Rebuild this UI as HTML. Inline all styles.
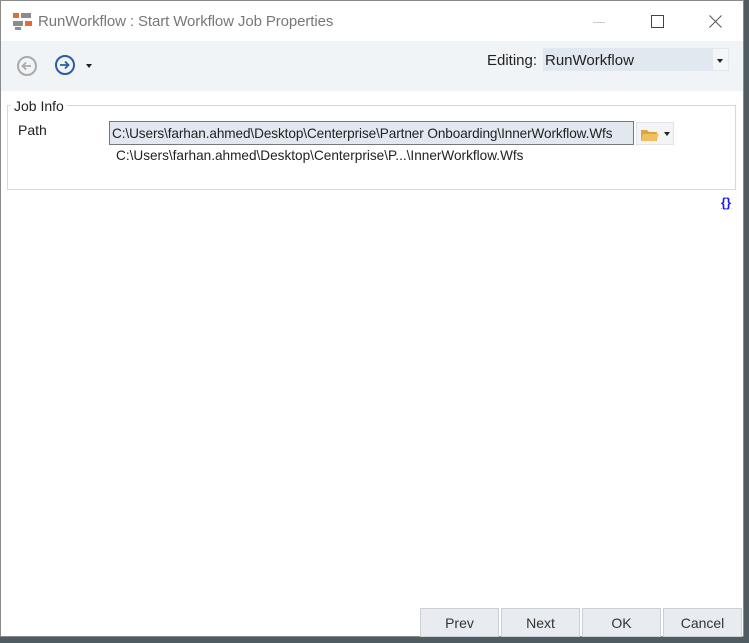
<!DOCTYPE html>
<html><head><style>
body{margin:0;width:749px;height:643px;overflow:hidden;background:#4f5d63;font-family:"Liberation Sans",sans-serif;position:relative}
.win{position:absolute;left:0;top:0;width:744px;height:637px;background:#fff;border:1px solid #8a8a8a;box-sizing:border-box}
.abs{position:absolute}
.t{font-size:14px;color:#222}
.btn{position:absolute;top:608px;height:29px;width:79px;background:#e8ecf0;border:1px solid #c9d0d6;box-sizing:border-box;text-align:center;line-height:28px;font-size:14px;color:#333}
</style></head><body>
<div class="win">
<svg class="abs" style="left:11px;top:10px" width="22" height="20"><rect x="1" y="2" width="6" height="5" fill="#e46b35"/><rect x="9" y="2" width="10" height="5" fill="#8c8c8c"/><rect x="1" y="10" width="10" height="5" fill="#8c8c8c"/><rect x="13" y="10" width="7" height="5" fill="#e46b35"/><rect x="3" y="16" width="6" height="3" fill="#8c8c8c"/></svg>
<div class="abs" style="left:37px;top:12px;font-size:15px;color:#777;letter-spacing:-0.1px">RunWorkflow : Start Workflow Job Properties</div>
<div class="abs" style="left:592px;top:21px;width:12px;height:1px;background:#ccc"></div>
<div class="abs" style="left:650px;top:14px;width:11px;height:11px;border:1px solid #444"></div>
<svg class="abs" style="left:708px;top:14px" width="13" height="13"><path d="M0.5 0.5L12.5 12.5M12.5 0.5L0.5 12.5" stroke="#555" stroke-width="1"/></svg>
<div class="abs" style="left:0;top:40px;width:742px;height:50px;background:#f1f4f7"></div>
<svg class="abs" style="left:15px;top:54px" width="22" height="22"><circle cx="11" cy="11" r="9" fill="none" stroke="#aaa" stroke-width="2"/><path d="M15 11H7M10 7.5L6.5 11L10 14.5" fill="none" stroke="#aaa" stroke-width="1.8"/></svg>
<svg class="abs" style="left:53px;top:53px" width="22" height="22"><circle cx="11" cy="11" r="9" fill="none" stroke="#2a5caa" stroke-width="2"/><path d="M6 11H14M11 7.5L14.5 11L11 14.5" fill="none" stroke="#2a5caa" stroke-width="1.8"/></svg>
<div class="abs" style="left:85px;top:63px;width:0;height:0;border-left:3px solid transparent;border-right:3px solid transparent;border-top:4px solid #222"></div>
<div class="abs t" style="left:486px;top:51px;font-size:15px">Editing:</div>
<div class="abs" style="left:542px;top:47px;width:186px;height:23px;background:#e2e8ef"></div>
<div class="abs t" style="left:544px;top:51px;font-size:15px">RunWorkflow</div>
<div class="abs" style="left:712px;top:48px;width:15px;height:21px;background:#f4f6f8"></div>
<div class="abs" style="left:716px;top:58px;border-left:3px solid transparent;border-right:3px solid transparent;border-top:4px solid #222"></div>
<div class="abs" style="left:6px;top:104px;width:729px;height:85px;border:1px solid #d4d9de;box-sizing:border-box"></div>
<div class="abs t" style="left:10px;top:97px;background:#fff;padding:0 3px">Job Info</div>
<div class="abs t" style="left:17px;top:121px">Path</div>
<div class="abs" style="left:108px;top:120px;width:525px;height:24px;background:#e2e8ef;border:1px solid #777;box-sizing:border-box"></div>
<div class="abs t" style="left:111px;top:125px;font-size:13.6px;letter-spacing:-0.1px">C:\Users\farhan.ahmed\Desktop\Centerprise\Partner Onboarding\InnerWorkflow.Wfs</div>
<div class="abs" style="left:635px;top:121px;width:38px;height:23px;background:#f2f4f6;border:1px solid #e0e4e8;box-sizing:border-box"></div>
<svg class="abs" style="left:639px;top:126px" width="20" height="15"><path d="M1 3h6l2 2h8v9H1z" fill="#d9a441"/><path d="M3 7h16l-3 7H1z" fill="#f0c060"/></svg>
<div class="abs" style="left:663px;top:131px;border-left:3px solid transparent;border-right:3px solid transparent;border-top:4px solid #222"></div>
<div class="abs t" style="left:115px;top:147px;font-size:13.6px;letter-spacing:0px">C:\Users\farhan.ahmed\Desktop\Centerprise\P...\InnerWorkflow.Wfs</div>
<div class="abs" style="left:720px;top:194px;font-size:13px;font-weight:bold;color:#1a1aee;text-decoration:underline">{}</div>
</div>
<div class="btn" style="left:420px">Prev</div>
<div class="btn" style="left:501px">Next</div>
<div class="btn" style="left:582px">OK</div>
<div class="btn" style="left:663px">Cancel</div>
</body></html>
